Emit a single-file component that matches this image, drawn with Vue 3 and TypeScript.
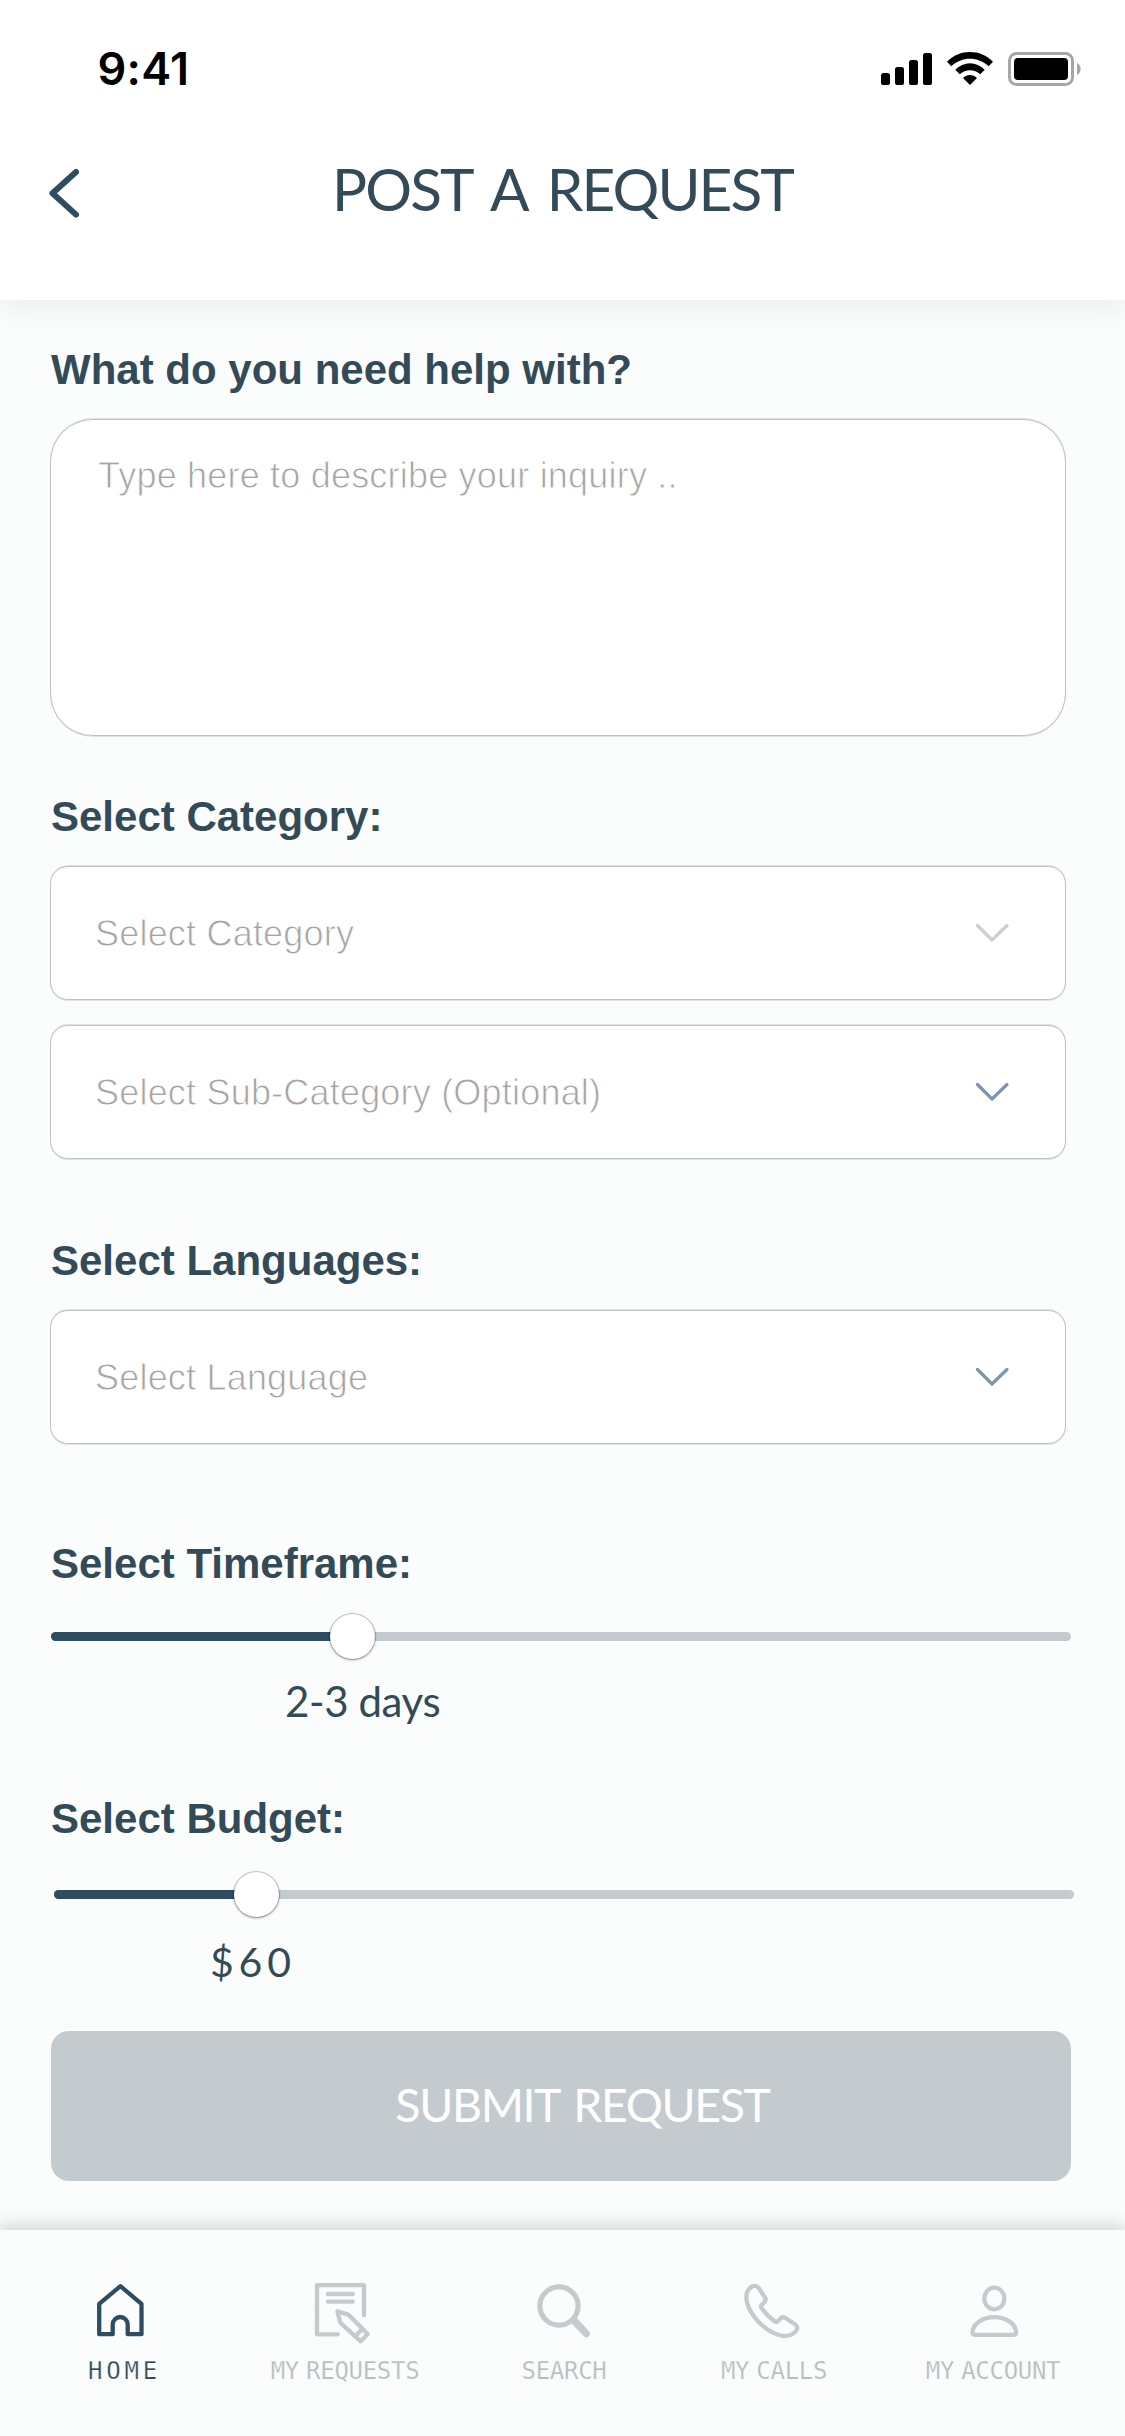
<script setup lang="ts">
type IconName = 'home' | 'requests' | 'search' | 'calls' | 'account'

interface NavItem {
  id: IconName
  label: string
  active?: boolean
}

const navItems: NavItem[] = [
  { id: 'home', label: 'HOME', active: true },
  { id: 'requests', label: 'MY REQUESTS' },
  { id: 'search', label: 'SEARCH' },
  { id: 'calls', label: 'MY CALLS' },
  { id: 'account', label: 'MY ACCOUNT' },
]

const timeframe = { label: '2-3 days', position: 29.6 }
const budget = { label: '$60', position: 19.9 }
</script>

<template>
  <div class="screen">
    <header class="header">
      <div class="status">
        <span class="time">9:41</span>
        <div class="indicators">
          <svg class="signal" width="51" height="34" viewBox="0 0 51 34">
            <rect x="0" y="21" width="9" height="12" rx="2.6" />
            <rect x="14" y="15" width="9" height="18" rx="2.6" />
            <rect x="28" y="8" width="9" height="25" rx="2.6" />
            <rect x="42" y="1" width="9" height="32" rx="2.6" />
          </svg>
          <svg class="wifi" width="46" height="34" viewBox="0 0 46 34">
            <path d="M0 9.7C12.5-3.2 33.5-3.2 46 9.7L41.7 14.2C31 4.2 15 4.2 4.3 14.2Z" />
            <path d="M8.3 17.7C16.5 9 29.5 9 37.7 17.7L33.2 22.3C27.3 17 18.7 17 12.8 22.3Z" />
            <path d="M16 26C20 22 26 22 30 26L23 33Z" />
          </svg>
          <svg class="battery" width="73" height="34" viewBox="0 0 73 34">
            <rect x="1.5" y="1.5" width="63" height="31" rx="7" fill="none" stroke="#a6a6a6" stroke-width="3" />
            <rect x="6" y="6" width="54" height="22" rx="4" />
            <path d="M69 11a6.8 6.8 0 0 1 0 12z" fill="#a6a6a6" />
          </svg>
        </div>
      </div>
      <div class="title-row">
        <svg class="back" width="34" height="54" viewBox="0 0 34 54">
          <path d="M28 6L4.5 27.2L28 48.6" />
        </svg>
        <h1 class="title">POST A REQUEST</h1>
      </div>
    </header>

    <main class="form">
      <h2 class="label">What do you need help with?</h2>
      <div class="field area"><span class="placeholder">Type here to describe your inquiry ..</span></div>

      <h2 class="label category-label">Select Category:</h2>
      <div class="field select">
        <span class="placeholder">Select Category</span>
        <svg class="chevron muted" width="34" height="20" viewBox="0 0 34 20"><path d="M2.5 2.5L17 17L32 2.5" /></svg>
      </div>
      <div class="field select sub">
        <span class="placeholder">Select Sub-Category (Optional)</span>
        <svg class="chevron" width="34" height="20" viewBox="0 0 34 20"><path d="M2.5 2.5L17 17L32 2.5" /></svg>
      </div>

      <h2 class="label language-label">Select Languages:</h2>
      <div class="field select">
        <span class="placeholder">Select Language</span>
        <svg class="chevron" width="34" height="20" viewBox="0 0 34 20"><path d="M2.5 2.5L17 17L32 2.5" /></svg>
      </div>

      <h2 class="label timeframe-label">Select Timeframe:</h2>
      <div class="slider timeframe">
        <div class="rail"><div class="fill" :style="{ width: timeframe.position + '%' }"></div></div>
        <div class="thumb" :style="{ left: timeframe.position + '%' }"></div>
      </div>
      <div class="value days">{{ timeframe.label }}</div>

      <h2 class="label budget-label">Select Budget:</h2>
      <div class="slider budget">
        <div class="rail"><div class="fill" :style="{ width: budget.position + '%' }"></div></div>
        <div class="thumb" :style="{ left: budget.position + '%' }"></div>
      </div>
      <div class="value dollars">{{ budget.label }}</div>

      <button class="submit" type="button">SUBMIT REQUEST</button>
    </main>

    <nav class="nav">
      <div v-for="item in navItems" :key="item.id" class="nav-item" :class="[item.id, { active: item.active }]">
        <svg class="nav-icon" width="70" height="66" viewBox="0 0 70 66">
          <path
            v-if="item.id === 'home'"
            d="M32.4 6.2L53.5 23.9V54.2H39.7V44.5a7.5 7.5 0 0 0-15 0V54.2H11.2V23.9Z"
          />
          <g v-else-if="item.id === 'requests'">
            <path d="M54 35.3V5.2H7V54.3H27.8M18 14H42.8M18 21.6H42.8" />
            <path d="M27.4 31.2L38.3 34.6L57.7 54L50.7 61.3L30.3 42.6ZM51.8 49.6L45 56.4" />
          </g>
          <g v-else-if="item.id === 'search'">
            <circle cx="30" cy="26" r="19.1" stroke-width="5.2" />
            <path d="M45.5 41L57.2 53.5" stroke-width="7.4" />
          </g>
          <path
            v-else-if="item.id === 'calls'"
            d="M11.5 7.5C14.5 5 18 5.5 20 8.5L26 17.5C27 19 26.8 20.5 25.5 22L22.5 25C21.8 26 21.8 27 22.5 28C26.5 33.5 30.5 37.5 35.5 41.2C36.8 42.2 38 42 39 41L41.5 38.5C43 37 45 37 46.5 38L56 44.3C58.5 46 59 48.5 57 51C53.5 55.5 49.5 56.5 43 55.7C33 54 22 46 15 36.5C10 29.5 7.3 23 7.3 17.5C7.3 12.5 9 9.5 11.5 7.5Z"
          />
          <g v-else>
            <ellipse cx="36.3" cy="18.5" rx="10" ry="10.8" />
            <path d="M14.5 52C15 43.5 25 37.1 36.3 37.1S57.6 43.5 58.2 52C58.2 54 57 54.8 55 54.8H17.6C15.5 54.8 14.4 54 14.5 52Z" />
          </g>
        </svg>
        <span class="nav-label">{{ item.label }}</span>
      </div>
    </nav>
  </div>
</template>

<style>
body {
  margin: 0;
  background: #fbfdfc;
}
</style>

<style scoped>
.screen {
  display: flex;
  flex-direction: column;
  width: 1125px;
  height: 2436px;
  overflow: hidden;
  background: #fbfdfc;
  color: #334a59;
  font-family: 'Liberation Sans', Arial, sans-serif;
}

.header {
  box-sizing: border-box;
  flex: none;
  height: 300px;
  padding-top: 44px;
  background: #fff;
  box-shadow: 0 9px 24px rgba(60, 75, 75, 0.08);
}

.status {
  display: flex;
  align-items: center;
  justify-content: space-between;
  height: 50px;
  padding: 0 44px 0 97.5px;
}

.time {
  color: #000;
  font: 600 45px/50px Inter, sans-serif;
  letter-spacing: 0.3px;
}

.indicators {
  display: flex;
}

.wifi {
  margin-left: 15px;
}

.battery {
  margin-left: 15px;
}

.title-row {
  display: flex;
  align-items: flex-start;
  height: 70px;
  margin-top: 58px;
  padding-left: 48px;
}

.back {
  flex: none;
  margin-top: 14px;
  fill: none;
  stroke: #2f4d60;
  stroke-width: 6;
  stroke-linecap: round;
  stroke-linejoin: round;
}

.title {
  margin: 1px 0 0 250px;
  font: 400 58.5px/70px Lato, sans-serif;
  letter-spacing: -1.9px;
  word-spacing: 8px;
  white-space: nowrap;
}

.form {
  flex: 1;
  padding: 46px 51px 0 50px;
}

.label {
  margin: 0;
  padding-left: 1px;
  font-size: 42px;
  font-weight: 700;
  line-height: 48px;
}

.field {
  box-sizing: border-box;
  width: 1016px;
  border: 1px solid #bcc4c8;
  background: #fff;
  box-shadow: 0 1px 0 #dde2e4, 0 -1px 0 #dde2e4;
}

.area {
  height: 317px;
  margin-top: 25px;
  padding: 36px 47px;
  border-radius: 43px;
}

.select {
  display: flex;
  align-items: center;
  justify-content: space-between;
  height: 134px;
  margin-top: 25px;
  padding: 0 56px 0 44px;
  border-radius: 18px;
}

.placeholder {
  color: #a4a4a4;
  font-size: 36px;
  line-height: 40px;
  letter-spacing: 0.2px;
  white-space: nowrap;
  -webkit-text-stroke: 0.8px #fff;
}

.select .placeholder {
  padding-top: 2px;
}

.chevron {
  fill: none;
  stroke: #7c97ab;
  stroke-width: 3.2;
  stroke-linecap: round;
  stroke-linejoin: round;
}

.chevron.muted {
  stroke: #c9d0d1;
}

.category-label {
  margin-top: 57px;
}

.language-label {
  margin-top: 78px;
}

.timeframe-label {
  margin-top: 96px;
}

.slider {
  position: relative;
  display: flex;
  align-items: center;
  width: 1020px;
  height: 47px;
}

.slider.timeframe {
  margin: 25px 0 0 1px;
}

.slider.budget {
  margin: 28px 0 0 4px;
}

.rail {
  width: 100%;
  height: 9px;
  overflow: hidden;
  border-radius: 5px;
  background: #c4cbcf;
}

.fill {
  height: 100%;
  background: #2f4d60;
}

.thumb {
  position: absolute;
  top: 1px;
  width: 45px;
  height: 45px;
  margin-left: -22.5px;
  border-radius: 50%;
  background: #fff;
  box-shadow: 0 0 0 1px rgba(0, 0, 0, 0.18), 0 1px 3px rgba(0, 0, 0, 0.38);
}

.value {
  font: 400 42px/48px Lato, sans-serif;
  white-space: nowrap;
}

.days {
  margin: 17px 0 0 235px;
  letter-spacing: -0.4px;
}

.budget-label {
  margin-top: 70px;
}

.dollars {
  margin: 20px 0 0 160px;
  font-size: 41px;
  letter-spacing: 4.8px;
}

.submit {
  display: block;
  width: 1020px;
  height: 150px;
  margin: 45px 0 0 1px;
  padding: 0 0 5px 43px;
  border: 0;
  border-radius: 18px;
  background: #c4cbcf;
  color: #fff;
  font: 400 46.5px/56px Lato, sans-serif;
  letter-spacing: -1.4px;
  word-spacing: 4px;
}

.nav {
  box-sizing: border-box;
  display: flex;
  flex: none;
  height: 206px;
  padding: 50px 0 0 12px;
  background: #fbfdfc;
  box-shadow: 0 -5px 15px rgba(50, 50, 65, 0.2);
}

.nav-item {
  display: flex;
  flex-direction: column;
  align-items: center;
  width: 222px;
  color: #b4bdc1;
}

.nav-item.search {
  width: 216px;
}

.nav-item.calls {
  width: 204px;
}

.nav-item.account {
  width: 234px;
}

.nav-item.active {
  color: #2f4d60;
}

.nav-icon {
  fill: none;
  stroke: #c4cbcf;
  stroke-width: 4.3;
  stroke-linecap: round;
  stroke-linejoin: round;
}

.active .nav-icon {
  stroke: #2f4d60;
}

.nav-label {
  margin-top: 10px;
  font: 400 24px/30px 'DejaVu Sans Mono', monospace;
  letter-spacing: -0.3px;
  word-spacing: -7px;
  white-space: nowrap;
  -webkit-text-stroke: 0.25px #fbfdfc;
}

.home .nav-label {
  margin-right: -3px;
  letter-spacing: 3.8px;
}
</style>
